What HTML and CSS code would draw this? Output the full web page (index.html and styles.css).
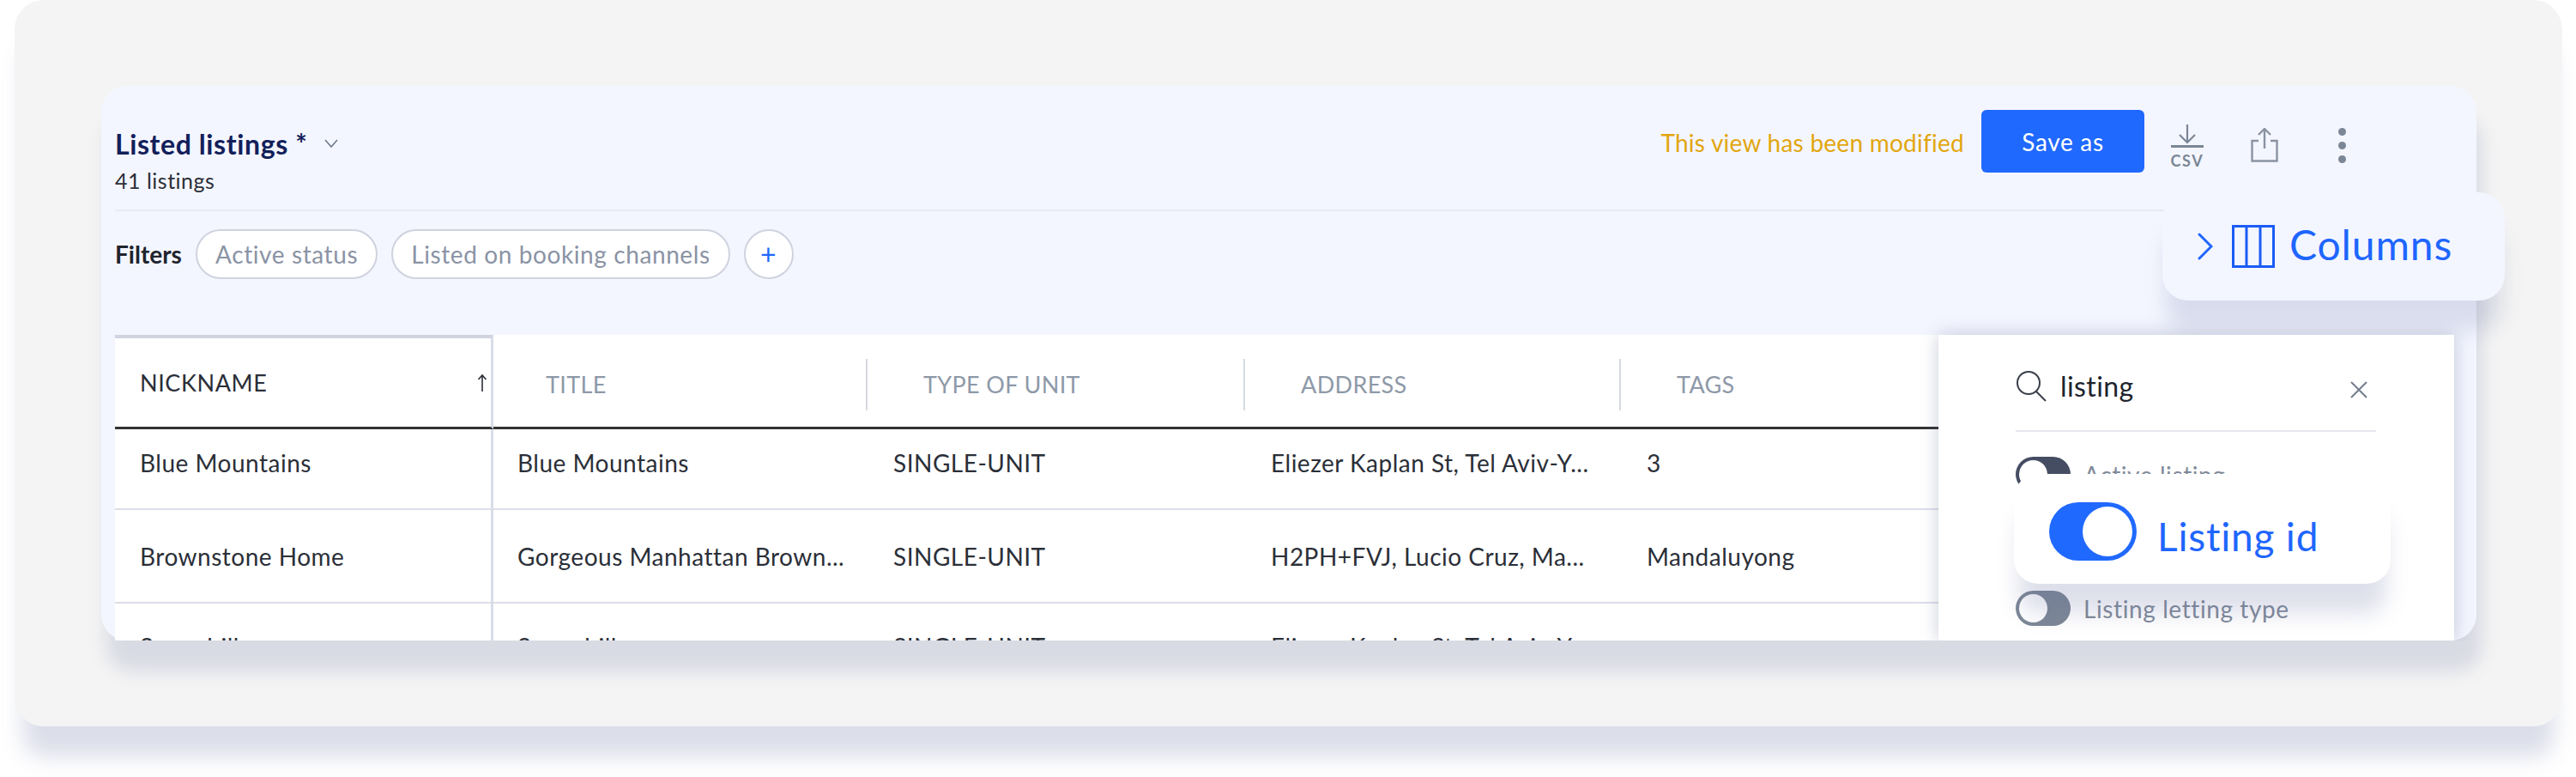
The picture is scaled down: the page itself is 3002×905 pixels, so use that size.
FILE: index.html
```html
<!DOCTYPE html>
<html lang="en">
<head>
    <meta charset="UTF-8">
    <title>Listed listings</title>
    <link rel="stylesheet" href="styles.css">
</head>
<body>
    <div class="card">
        <div class="panel">
            <div class="head">
                <div class="title-block">
                    <div class="title"><span>Listed listings *</span>
                        <svg class="caret" width="18" height="12" viewBox="0 0 18 12"><path d="M2 2l7 8 7-8" fill="none" stroke="#6f7a8c" stroke-width="1.6"/></svg>
                    </div>
                    <div class="count">41 listings</div>
                </div>
                <div class="actions">
                    <span class="modified">This view has been modified</span>
                    <button class="save">Save as</button>
                    <div class="icon-box">
                        <svg width="38" height="28" viewBox="0 0 38 28"><path d="M19 0v20M10 12l9 9 9-9" fill="none" stroke="#7b8696" stroke-width="2.2"/><path d="M0 25.5h38" stroke="#7b8696" stroke-width="3"/></svg>
                        <span class="csv">CSV</span>
                    </div>
                    <div class="icon-box">
                        <svg width="32" height="40" viewBox="0 0 32 40"><path d="M9 15H1.5v23.5h29V15H23M16 24V1M9 8l7-7 7 7" fill="none" stroke="#8a93a2" stroke-width="2.4"/></svg>
                    </div>
                    <div class="icon-box">
                        <div class="dots"><i></i><i></i><i></i></div>
                    </div>
                </div>
            </div>
            <div class="filters">
                <span class="filters-label">Filters</span>
                <span class="pill">Active status</span>
                <span class="pill">Listed on booking channels</span>
                <span class="pill pill-add">+</span>
            </div>

            <div class="columns-tab">
                <svg width="18" height="32" viewBox="0 0 18 32"><path d="M2 2l14 14L2 30" fill="none" stroke="#1f66ff" stroke-width="3" stroke-linecap="round"/></svg>
                <svg class="columns-icon" width="50" height="50" viewBox="0 0 50 50"><path d="M1.5 1.5h47v47h-47zM17 1.5v47M33 1.5v47" fill="none" stroke="#1a5cf5" stroke-width="3"/></svg>
                <span>Columns</span>
            </div>

            <div class="table-area">
                <div class="table">
                    <div class="th th-sticky"><span>NICKNAME</span>
                        <svg width="12" height="22" viewBox="0 0 12 22"><path d="M6 21V2M1.5 7L6 2l4.5 5" fill="none" stroke="#2b2f38" stroke-width="1.6"/></svg>
                    </div>
                    <div class="th"><span class="th-label no-line">TITLE</span></div>
                    <div class="th"><span class="th-label">TYPE OF UNIT</span></div>
                    <div class="th"><span class="th-label">ADDRESS</span></div>
                    <div class="th"><span class="th-label">TAGS</span></div>

                    <div class="td first-row td-sticky">Blue Mountains</div>
                    <div class="td first-row td-title">Blue Mountains</div>
                    <div class="td first-row">SINGLE-UNIT</div>
                    <div class="td first-row">Eliezer Kaplan St, Tel Aviv-Y...</div>
                    <div class="td first-row">3</div>

                    <div class="td td-sticky">Brownstone Home</div>
                    <div class="td td-title">Gorgeous Manhattan Brown...</div>
                    <div class="td">SINGLE-UNIT</div>
                    <div class="td">H2PH+FVJ, Lucio Cruz, Ma...</div>
                    <div class="td">Mandaluyong</div>

                    <div class="td last-row td-sticky">Sunnyhill</div>
                    <div class="td last-row td-title">Sunnyhill</div>
                    <div class="td last-row">SINGLE-UNIT</div>
                    <div class="td last-row">Eliezer Kaplan St, Tel Aviv-Y...</div>
                    <div class="td last-row"></div>
                </div>

                <div class="col-picker">
                    <div class="search">
                        <svg width="36" height="36" viewBox="0 0 36 36"><circle cx="15" cy="14" r="13" fill="none" stroke="#3a3f4a" stroke-width="2"/><path d="M24 24l11 11" stroke="#3a3f4a" stroke-width="2"/></svg>
                        <span class="search-text">listing</span>
                        <svg class="search-x" width="20" height="20" viewBox="0 0 20 20"><path d="M1 1l18 18M19 1L1 19" stroke="#747d8d" stroke-width="2"/></svg>
                    </div>
                    <div class="col-list">
                        <div class="col-row"><span class="toggle toggle-dark"><i></i></span>Active listing</div>
                        <div class="col-row"><span class="toggle"><i></i></span></div>
                        <div class="col-row"><span class="toggle"><i></i></span>Listing letting type</div>
                    </div>
                    <div class="col-float">
                        <span class="big-toggle"><i></i></span>
                        <span class="float-label">Listing id</span>
                    </div>
                </div>
            </div>
        </div>
    </div>
</body>
</html>
```

FILE: styles.css
```css
*{
    margin: 0;
    padding: 0;
    box-sizing: border-box;
}
body{
    height: 905px;
    background: #fff;
    font-family: "Lato", "Liberation Sans", sans-serif;
}
.card{
    width: 2969px;
    height: 846px;
    margin-left: 17px;
    padding: 100px 100px 0 101px;
    background: #f4f4f4;
    border-radius: 34px;
    box-shadow: 0 45px 26px -10px rgba(100,110,160,.23);
}
.panel{
    position: relative;
    height: 646px;
    padding: 0 16px;
    background: #f4f6ff;
    border-radius: 30px;
    box-shadow: 6px 36px 20px 0 rgba(100,110,160,.19);
}

/* header */
.head{
    display: flex;
    justify-content: space-between;
    height: 146px;
    padding: 28px 96px 0 0;
    border-bottom: 2px solid #e6e9f3;
}
.title-block{
    padding-top: 21px;
}
.title{
    display: flex;
    align-items: center;
    height: 36px;
    font-size: 32px;
    font-weight: 700;
    color: #12205a;
    letter-spacing: .6px;
}
.caret{
    margin-left: 19px;
}
.count{
    margin-top: 10px;
    font-size: 25px;
    line-height: 30px;
    color: #2b2f38;
    letter-spacing: .5px;
}
.actions{
    display: flex;
    align-items: flex-start;
    height: 73px;
}
.modified{
    margin: 20px 20px 0 0;
    font-size: 28px;
    line-height: 36px;
    color: #e2a60f;
    letter-spacing: .25px;
}
.save{
    width: 190px;
    height: 73px;
    margin-right: 5px;
    border: 0;
    border-radius: 6px;
    background: #2069ff;
    color: #fff;
    font: 28px "Lato", sans-serif;
    letter-spacing: .7px;
}
.icon-box{
    display: flex;
    flex-direction: column;
    align-items: center;
    justify-content: center;
    width: 90px;
    height: 73px;
    padding-top: 9px;
}
.csv{
    margin-top: 7px;
    font-size: 18px;
    line-height: 14px;
    font-weight: 700;
    letter-spacing: 1.6px;
    color: #7b8696;
}
.dots{
    display: flex;
    flex-direction: column;
    gap: 7px;
}
.dots i{
    width: 9px;
    height: 9px;
    border-radius: 50%;
    background: #7b8696;
}

/* filters */
.filters{
    display: flex;
    align-items: center;
    gap: 16px;
    height: 58px;
    margin-top: 21px;
}
.filters-label{
    width: 78px;
    font-size: 28px;
    font-weight: 700;
    color: #20242e;
}
.pill{
    height: 58px;
    padding: 0 21px;
    border: 2px solid #cfd3df;
    border-radius: 29px;
    background: #fff;
    font-size: 28px;
    line-height: 54px;
    color: #8a93a5;
    letter-spacing: .6px;
}
.pill-add{
    width: 58px;
    padding: 0;
    text-align: center;
    color: #2069ff;
    font-size: 32px;
}

/* floating tab */
.columns-tab{
    position: absolute;
    left: 2402px;
    top: 124px;
    z-index: 1;
    display: flex;
    align-items: center;
    width: 399px;
    height: 126px;
    padding-left: 41px;
    background: #f4f6ff;
    border-radius: 30px;
    box-shadow: 0 38px 24px -4px rgba(100,110,160,.19);
    color: #1f66ff;
    font-size: 48px;
    letter-spacing: .9px;
}
.columns-tab span{
    margin-top: -5px;
}
.columns-icon{
    margin: 0 17px 0 22px;
}

/* table */
.table-area{
    position: relative;
    z-index: 2;
    display: flex;
    height: 356px;
    margin: 65px 10px 0 0;
    clip-path: inset(-60px -60px 0 -60px);
}
.table{
    display: grid;
    grid-template-columns: 441px 434px 440px 438px 372px;
    grid-template-rows: 110px 94px 109px 108px;
    flex: none;
    width: 2125px;
    background: #fff;
    font-size: 28px;
    color: #2b2f38;
    letter-spacing: .5px;
}
.th{
    display: flex;
    align-items: center;
    border-bottom: 3px solid #333;
    color: #8e99a8;
    font-size: 27px;
    letter-spacing: .35px;
    padding-top: 8px;
}
.th-sticky{
    justify-content: space-between;
    padding: 0 4px 0 29px;
    border-top: 4px solid #d0d3e0;
    border-right: 3px solid #d9dce8;
    color: #2b2f38;
    letter-spacing: .6px;
}
.th-label{
    display: block;
    height: 60px;
    padding-left: 65px;
    line-height: 60px;
    border-left: 2px solid #d6d9e2;
}
.th-label.no-line{
    padding-left: 61px;
    border-left: 0;
}
.td{
    display: flex;
    align-items: center;
    padding-left: 32px;
    border-bottom: 2px solid #dcdfe9;
    white-space: nowrap;
}
.first-row{
    padding-bottom: 15px;
}
.last-row{
    padding-bottom: 6px;
}
.td-sticky{
    padding-left: 29px;
    border-right: 3px solid #d9dce8;
}
.td-title{
    padding-left: 28px;
}

/* column picker */
.col-picker{
    position: relative;
    flex: none;
    width: 601px;
    padding: 0 91px 0 90px;
    background: #fff;
    box-shadow: 0 0 20px rgba(80,90,130,.3);
}
.search{
    display: flex;
    align-items: center;
    height: 113px;
    padding-top: 8px;
    border-bottom: 2px solid #e6e8ef;
    font-size: 32px;
    color: #20242e;
    letter-spacing: .4px;
}
.search-text{
    margin-left: 16px;
    flex: 1;
}
.search-x{
    margin: 9px 10px 0 0;
}
.col-list{
    display: flex;
    flex-direction: column;
    gap: 37px;
    padding-top: 29px;
}
.col-row{
    display: flex;
    align-items: center;
    gap: 15px;
    height: 41px;
    font-size: 28px;
    color: #7f8a99;
    letter-spacing: .6px;
}
.toggle{
    display: block;
    width: 64px;
    height: 41px;
    padding: 4px;
    border-radius: 21px;
    background: #7c8796;
}
.toggle i{
    display: block;
    width: 33px;
    height: 33px;
    border-radius: 50%;
    background: #fff;
}
.toggle-dark{
    background: #454d63;
}
.col-float{
    position: absolute;
    left: 88px;
    top: 162px;
    display: flex;
    align-items: center;
    gap: 24px;
    width: 439px;
    height: 128px;
    padding: 6px 0 0 41px;
    background: #fff;
    border-radius: 28px;
    box-shadow: 0 40px 26px -6px rgba(100,110,160,.22);
    color: #1f66ff;
    font-size: 46px;
    letter-spacing: .8px;
}
.float-label{
    margin-top: 10px;
}
.big-toggle{
    display: flex;
    justify-content: flex-end;
    width: 102px;
    height: 68px;
    padding: 5px;
    border-radius: 34px;
    background: #2069ff;
}
.big-toggle i{
    width: 58px;
    height: 58px;
    border-radius: 50%;
    background: #fff;
}
```
